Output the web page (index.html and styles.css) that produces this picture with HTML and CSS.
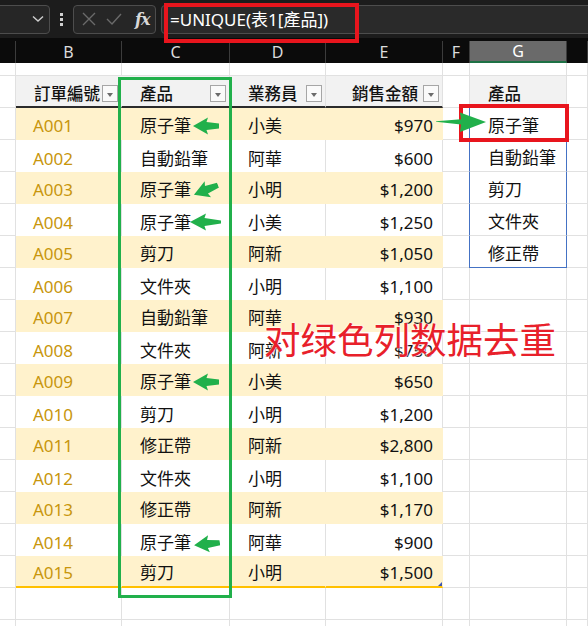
FILE: index.html
```html
<!DOCTYPE html>
<html>
<head>
<meta charset="utf-8">
<link rel="stylesheet" href="styles.css">
</head>
<body>
<div class="page">
  <div class="topbar">
    <div class="namebox"><svg class="chev" width="12" height="8" viewBox="0 0 12 8"><path d="M1 1.5 L6 6 L11 1.5" fill="none" stroke="#cfcfcf" stroke-width="1.4"/></svg></div>
    <div class="dots"><span></span><span></span><span></span></div>
    <div class="fxbox">
      <svg width="16" height="16" viewBox="0 0 16 16"><path d="M2 2 L14 14 M14 2 L2 14" stroke="#6a6a6a" stroke-width="1.4"/></svg>
      <svg width="18" height="16" viewBox="0 0 18 16"><path d="M2 8 L7 13 L16 3" fill="none" stroke="#6a6a6a" stroke-width="1.4"/></svg>
      <span class="fx">fx</span>
    </div>
    <div class="formula">=UNIQUE(表1[產品])</div>
  </div>
  <div class="colheads">
    <div class="ch"></div><div class="ch">B</div><div class="ch">C</div><div class="ch">D</div><div class="ch">E</div><div class="ch">F</div><div class="ch sel">G</div><div class="ch"></div>
  </div>
  <div class="sheet">
    <div class="row part"><div class="c"></div><div class="c"></div><div class="c"></div><div class="c"></div><div class="c"></div><div class="c"></div><div class="c"></div><div class="c"></div></div>
    <div class="row hdr">
      <div class="c"></div>
      <div class="c th">訂單編號<i class="dd"></i></div>
      <div class="c th sp">產品<i class="dd"></i></div>
      <div class="c th sp">業務員<i class="dd"></i></div>
      <div class="c th end">銷售金額<i class="dd"></i></div>
      <div class="c"></div>
      <div class="c th g">產品</div>
      <div class="c"></div>
    </div>
    <div class="row y"><div class="c"></div><div class="c id">A001</div><div class="c t">原子筆</div><div class="c t">小美</div><div class="c n">$970</div><div class="c"></div><div class="c gl">原子筆</div><div class="c"></div></div>
    <div class="row w"><div class="c"></div><div class="c id">A002</div><div class="c t">自動鉛筆</div><div class="c t">阿華</div><div class="c n">$600</div><div class="c"></div><div class="c gl">自動鉛筆</div><div class="c"></div></div>
    <div class="row y"><div class="c"></div><div class="c id">A003</div><div class="c t">原子筆</div><div class="c t">小明</div><div class="c n">$1,200</div><div class="c"></div><div class="c gl">剪刀</div><div class="c"></div></div>
    <div class="row w"><div class="c"></div><div class="c id">A004</div><div class="c t">原子筆</div><div class="c t">小美</div><div class="c n">$1,250</div><div class="c"></div><div class="c gl">文件夾</div><div class="c"></div></div>
    <div class="row y"><div class="c"></div><div class="c id">A005</div><div class="c t">剪刀</div><div class="c t">阿新</div><div class="c n">$1,050</div><div class="c"></div><div class="c gl last">修正帶</div><div class="c"></div></div>
    <div class="row w"><div class="c"></div><div class="c id">A006</div><div class="c t">文件夾</div><div class="c t">小明</div><div class="c n">$1,100</div><div class="c"></div><div class="c"></div><div class="c"></div></div>
    <div class="row y"><div class="c"></div><div class="c id">A007</div><div class="c t">自動鉛筆</div><div class="c t">阿華</div><div class="c n">$930</div><div class="c"></div><div class="c"></div><div class="c"></div></div>
    <div class="row w"><div class="c"></div><div class="c id">A008</div><div class="c t">文件夾</div><div class="c t">阿新</div><div class="c n">$750</div><div class="c"></div><div class="c"></div><div class="c"></div></div>
    <div class="row y"><div class="c"></div><div class="c id">A009</div><div class="c t">原子筆</div><div class="c t">小美</div><div class="c n">$650</div><div class="c"></div><div class="c"></div><div class="c"></div></div>
    <div class="row w"><div class="c"></div><div class="c id">A010</div><div class="c t">剪刀</div><div class="c t">小明</div><div class="c n">$1,200</div><div class="c"></div><div class="c"></div><div class="c"></div></div>
    <div class="row y"><div class="c"></div><div class="c id">A011</div><div class="c t">修正帶</div><div class="c t">阿新</div><div class="c n">$2,800</div><div class="c"></div><div class="c"></div><div class="c"></div></div>
    <div class="row w"><div class="c"></div><div class="c id">A012</div><div class="c t">文件夾</div><div class="c t">小明</div><div class="c n">$1,100</div><div class="c"></div><div class="c"></div><div class="c"></div></div>
    <div class="row y"><div class="c"></div><div class="c id">A013</div><div class="c t">修正帶</div><div class="c t">阿新</div><div class="c n">$1,170</div><div class="c"></div><div class="c"></div><div class="c"></div></div>
    <div class="row w"><div class="c"></div><div class="c id">A014</div><div class="c t">原子筆</div><div class="c t">阿華</div><div class="c n">$900</div><div class="c"></div><div class="c"></div><div class="c"></div></div>
    <div class="row y lastrow"><div class="c"></div><div class="c id">A015</div><div class="c t">剪刀</div><div class="c t">小明</div><div class="c n">$1,500<i class="corner"></i></div><div class="c"></div><div class="c"></div><div class="c"></div></div>
    <div class="row e"><div class="c"></div><div class="c"></div><div class="c"></div><div class="c"></div><div class="c"></div><div class="c"></div><div class="c"></div><div class="c"></div></div>
    <div class="row e"><div class="c"></div><div class="c"></div><div class="c"></div><div class="c"></div><div class="c"></div><div class="c"></div><div class="c"></div><div class="c"></div></div>
  </div>

  <div class="box redf"></div>
  <div class="box redg"></div>
  <div class="box greenc"></div>

  <svg class="arrow a1" width="26" height="18" viewBox="0 0 26 18"><path d="M0 9 L15 0.5 L13.5 5 L26 6.5 L26 11.5 L13.5 13 L15 17.5 Z" fill="#21b04b"/></svg>
  <svg class="arrow a3" width="26" height="18" viewBox="0 0 26 18"><path d="M0 9 L15 0.5 L13.5 5 L26 6.5 L26 11.5 L13.5 13 L15 17.5 Z" fill="#21b04b"/></svg>
  <svg class="arrow a4" width="31" height="18" viewBox="0 0 31 18"><path d="M0 9 L16 0.5 L14.5 5 L31 7.5 L31 10.5 L14.5 13 L16 17.5 Z" fill="#21b04b"/></svg>
  <svg class="arrow a9" width="26" height="18" viewBox="0 0 26 18"><path d="M0 9 L15 0.5 L13.5 5 L26 6.5 L26 11.5 L13.5 13 L15 17.5 Z" fill="#21b04b"/></svg>
  <svg class="arrow a14" width="26" height="18" viewBox="0 0 26 18"><path d="M0 9 L15 0.5 L13.5 5 L26 6.5 L26 11.5 L13.5 13 L15 17.5 Z" fill="#21b04b"/></svg>
  <svg class="arrow ar" width="60" height="28" viewBox="0 0 60 28"><path d="M6 13.2 L31 11.2 L30 4.5 L56 14 L30 24 L31 16.5 L6 13.8 Z" fill="#21b04b"/></svg>

  <div class="note">对绿色列数据去重</div>
</div>
</body>
</html>
```

FILE: styles.css
```css
* { box-sizing: border-box; margin: 0; padding: 0; }
html, body { width: 588px; height: 626px; overflow: hidden; background: #ffffff; }
body { font-family: "Noto Sans", "Noto Sans CJK TC", sans-serif; }
.page { position: relative; width: 588px; height: 626px; overflow: hidden; }

.topbar {
  height: 38px;
  background: #1c1c1c;
  display: flex;
  align-items: center;
  position: relative;
}
.namebox {
  width: 58px;
  height: 29px;
  margin-left: -8px;
  border: 1px solid #4d4d4d;
  border-radius: 4px;
  background: #262626;
  display: flex;
  align-items: center;
  justify-content: flex-end;
  padding-right: 5px;
}
.dots {
  width: 23px;
  display: flex;
  flex-direction: column;
  align-items: center;
  gap: 2px;
}
.dots span { width: 3px; height: 3px; background: #d0d0d0; display: block; }
.fxbox {
  width: 83px;
  height: 29px;
  border: 1px solid #4d4d4d;
  border-radius: 4px;
  background: #262626;
  display: flex;
  align-items: center;
  padding-left: 7px;
  gap: 8px;
}
.fx {
  font-family: "DejaVu Serif", "Liberation Serif", serif;
  font-style: italic;
  font-weight: bold;
  font-size: 16px;
  color: #d8d8d8;
  margin-left: 4px;
  letter-spacing: -1px;
}
.formula {
  flex: 1;
  height: 29px;
  margin-left: 5px;
  margin-right: -10px;
  border: 1px solid #4d4d4d;
  border-radius: 4px;
  background: #2a2a2a;
  color: #ffffff;
  font-family: "Noto Sans", "Noto Sans CJK TC", sans-serif;
  font-size: 17px;
  line-height: 27px;
  padding-left: 8px;
}

.colheads {
  height: 25px;
  background: #0b0b0b;
  display: grid;
  grid-template-columns: 16px 106px 108px 96px 117px 27px 97px 21px;
}
.ch {
  border-right: 1px solid #3c3c3c;
  margin-top: 3px;
  color: #dcdcdc;
  font-size: 16px;
  text-align: center;
  line-height: 22px;
  font-family: "Noto Sans", sans-serif;
}
.ch.sel { background: #6a6a6a; border-bottom: 2px solid #1e7145; color: #ffffff; margin-top: 3px; line-height: 20px; }

.sheet { font-family: "Noto Sans", "Noto Sans CJK TC", sans-serif; }
.row {
  display: grid;
  grid-template-columns: 16px 106px 108px 96px 117px 27px 97px 21px;
  height: 32px;
}
.c {
  border-right: 1px solid #e1e1e1;
  border-bottom: 1px solid #e1e1e1;
  font-size: 17px;
  color: #111;
  display: flex;
  align-items: flex-end;
  padding-bottom: 2px;
  white-space: nowrap;
  position: relative;
}
.row.part { height: 13px; }
.row.hdr { height: 32px; }
.row.hdr .c:nth-child(n+2):nth-child(-n+5), .row.hdr .c.g {
  background: #f2f2f2;
  border-bottom: 2px solid #2b2b2b;
  font-weight: 500;
  font-size: 16.5px;
  padding-left: 18px;
  padding-bottom: 1px;
  color: #111;
}
.row.hdr .c:nth-child(2) { border-right-color: #f2f2f2; padding-left: 17px; }
.row.hdr .c.sp { border-right-color: #e1e1e1; }
.row.hdr .c.end { justify-content: flex-end; padding-right: 24px; }
.dd {
  position: absolute;
  right: 3px;
  bottom: 4px;
  width: 16px;
  height: 17px;
  border: 1px solid #a6a6a6;
  background: #fafafa;
}
.dd::after {
  content: "";
  position: absolute;
  left: 4px;
  top: 7px;
  border-left: 3.5px solid transparent;
  border-right: 3.5px solid transparent;
  border-top: 4px solid #6b6b6b;
}

.row.y .c:nth-child(n+2):nth-child(-n+5) { background: #fff2cc; border-color: #fff2cc; }
.row.w .c:nth-child(n+2):nth-child(-n+5) { border-bottom: none; }
.row.lastrow .c:nth-child(n+2):nth-child(-n+5) { border-bottom: 2px solid #ffc000; }

.c.id { color: #c8960c; padding-left: 17px; }
.c.t { padding-left: 18px; }
.c.n { justify-content: flex-end; padding-right: 9px; }
.row.w .c.n { border-right-color: #e1e1e1; }

.c.gl { padding-left: 18px; border-left: 1px solid #4472c4; border-right: 1px solid #4472c4; margin-left: -1px; }
.c.gl.last { border-bottom: 1px solid #4472c4; }

.corner {
  position: absolute;
  right: 0;
  bottom: 0;
  width: 0;
  height: 0;
  border-left: 4px solid transparent;
  border-bottom: 4px solid #3b56b5;
}

.box { position: absolute; }
.redf { left: 164px; top: 3px; width: 195px; height: 40px; border: 4px solid #e8151d; }
.redg { left: 459px; top: 104px; width: 110px; height: 38px; border: 4px solid #e8151d; }
.greenc { left: 118px; top: 77px; width: 114px; height: 521px; border: 3px solid #21b04b; }

.arrow { position: absolute; }
.a1 { left: 193px; top: 117px; }
.a3 { left: 193px; top: 181px; transform: rotate(-22deg); }
.a4 { left: 190px; top: 213px; }
.a9 { left: 193px; top: 373px; }
.a14 { left: 194px; top: 535px; transform: rotate(-6deg); }
.ar { left: 430px; top: 108px; }

.note {
  position: absolute;
  left: 264px;
  top: 314px;
  font-family: "Noto Sans CJK SC", sans-serif;
  font-size: 36.5px;
  line-height: 50px;
  color: #e8202a;
  text-shadow: 0 0 2px #ffffff, 0 0 2px #ffffff;
  white-space: nowrap;
}
```
